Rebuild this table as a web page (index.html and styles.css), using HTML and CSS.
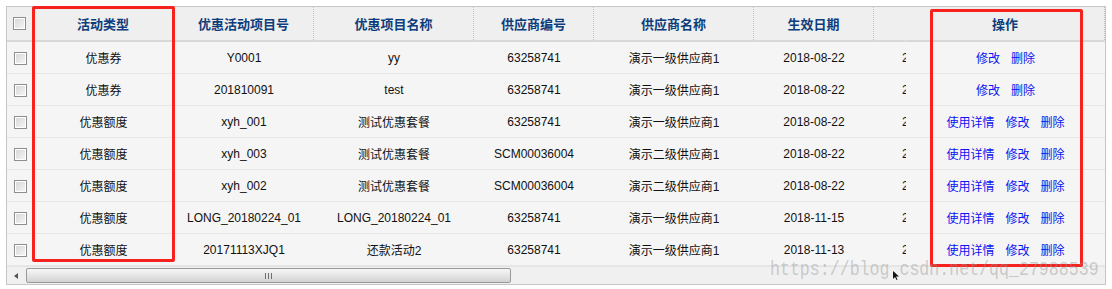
FILE: index.html
```html
<!DOCTYPE html>
<html lang="zh-CN">
<head>
    <meta charset="UTF-8">
    <title>活动列表</title>
    <link rel="stylesheet" href="styles.css">
</head>
<body>
    <div class="datagrid">
        <table class="grid-table">
            <colgroup>
                <col class="col-ck">
                <col class="col-type">
                <col class="col-no">
                <col class="col-name">
                <col class="col-sup">
                <col class="col-supname">
                <col class="col-date">
                <col class="col-end">
                <col class="col-op">
            </colgroup>
            <thead>
                <tr>
                    <th><span class="ck"></span></th>
                    <th>活动类型</th>
                    <th>优惠活动项目号</th>
                    <th>优惠项目名称</th>
                    <th>供应商编号</th>
                    <th>供应商名称</th>
                    <th>生效日期</th>
                    <th></th>
                    <th>操作</th>
                </tr>
            </thead>
            <tbody>
                <tr>
                    <td><span class="ck"></span></td>
                    <td>优惠券</td>
                    <td>Y0001</td>
                    <td>yy</td>
                    <td>63258741</td>
                    <td>演示一级供应商1</td>
                    <td>2018-08-22</td>
                    <td class="cut"><span>2</span></td>
                    <td class="ops"><a href="#">修改</a><a href="#">删除</a></td>
                </tr>
                <tr>
                    <td><span class="ck"></span></td>
                    <td>优惠券</td>
                    <td>201810091</td>
                    <td>test</td>
                    <td>63258741</td>
                    <td>演示一级供应商1</td>
                    <td>2018-08-22</td>
                    <td class="cut"><span>2</span></td>
                    <td class="ops"><a href="#">修改</a><a href="#">删除</a></td>
                </tr>
                <tr>
                    <td><span class="ck"></span></td>
                    <td>优惠额度</td>
                    <td>xyh_001</td>
                    <td>测试优惠套餐</td>
                    <td>63258741</td>
                    <td>演示一级供应商1</td>
                    <td>2018-08-22</td>
                    <td class="cut"><span>2</span></td>
                    <td class="ops"><a href="#">使用详情</a><a href="#">修改</a><a href="#">删除</a></td>
                </tr>
                <tr>
                    <td><span class="ck"></span></td>
                    <td>优惠额度</td>
                    <td>xyh_003</td>
                    <td>测试优惠套餐</td>
                    <td>SCM00036004</td>
                    <td>演示二级供应商1</td>
                    <td>2018-08-22</td>
                    <td class="cut"><span>2</span></td>
                    <td class="ops"><a href="#">使用详情</a><a href="#">修改</a><a href="#">删除</a></td>
                </tr>
                <tr>
                    <td><span class="ck"></span></td>
                    <td>优惠额度</td>
                    <td>xyh_002</td>
                    <td>测试优惠套餐</td>
                    <td>SCM00036004</td>
                    <td>演示二级供应商1</td>
                    <td>2018-08-22</td>
                    <td class="cut"><span>2</span></td>
                    <td class="ops"><a href="#">使用详情</a><a href="#">修改</a><a href="#">删除</a></td>
                </tr>
                <tr>
                    <td><span class="ck"></span></td>
                    <td>优惠额度</td>
                    <td>LONG_20180224_01</td>
                    <td>LONG_20180224_01</td>
                    <td>63258741</td>
                    <td>演示一级供应商1</td>
                    <td>2018-11-15</td>
                    <td class="cut"><span>2</span></td>
                    <td class="ops"><a href="#">使用详情</a><a href="#">修改</a><a href="#">删除</a></td>
                </tr>
                <tr>
                    <td><span class="ck"></span></td>
                    <td>优惠额度</td>
                    <td>20171113XJQ1</td>
                    <td>还款活动2</td>
                    <td>63258741</td>
                    <td>演示一级供应商1</td>
                    <td>2018-11-13</td>
                    <td class="cut"><span>2</span></td>
                    <td class="ops"><a href="#">使用详情</a><a href="#">修改</a><a href="#">删除</a></td>
                </tr>
            </tbody>
        </table>
        <!-- horizontal scrollbar of the grid body -->
        <div class="hscroll">
            <span class="hs-btn"><i class="hs-arrow"></i></span>
            <span class="hs-thumb"><i class="hs-grip"></i></span>
        </div>
    </div>

    <!-- red highlight frames -->
    <div class="mark mark-type"></div>
    <div class="mark mark-op"></div>

    <div class="watermark">https://blog.csdn.net/qq_27988539</div>
    <svg class="pointer" width="6" height="9" viewBox="0 0 6 9"><path d="M0 0 L0 8 L2 6 L3.5 9 L4.5 8.5 L3 5.5 L6 5.5 Z" fill="#111"/></svg>
</body>
</html>
```

FILE: styles.css
```css
body{
    margin: 0;
    padding: 6px;
    background-color: #fff;
    font-family: "Liberation Sans", "Noto Sans CJK SC", sans-serif;
    font-size: 12px;
    color: #111;
}

.datagrid{
    width: 1100px;
    box-sizing: border-box;
    border: 1px solid #c6c6c6;
    background-color: #f5f5f5;
    overflow: hidden;
}

.grid-table{
    width: 1098px;
    table-layout: fixed;
    border-collapse: separate;
    border-spacing: 0;
}
.col-ck{ width: 26px; }
.col-type{ width: 141px; }
.col-no{ width: 140px; }
.col-name{ width: 160px; }
.col-sup{ width: 120px; }
.col-supname{ width: 160px; }
.col-date{ width: 120px; }
.col-end{ width: 32px; }
.col-op{ width: 199px; }

.grid-table th{
    height: 33px;
    padding: 0;
    background-color: #efefef;
    border-bottom: 2px solid #d8d8d8;
    border-right: 1px dotted #c4c4c4;
    color: #0d3d7c;
    font-size: 13px;
    font-weight: bold;
    text-align: center;
}
.grid-table th:nth-child(8){
    border-right-color: transparent;
}

.grid-table td{
    height: 31px;
    padding: 0;
    border-bottom: 1px solid #e6e6e6;
    text-align: center;
    white-space: nowrap;
    overflow: hidden;
}
.grid-table td.cut{
    text-align: left;
    padding-left: 28px;
}
/* the next column runs on under the frozen op column, only its first digit shows */
.cut span{
    display: inline-block;
    width: 4px;
    overflow: hidden;
    vertical-align: middle;
}

.ck{
    display: inline-block;
    width: 11px;
    height: 11px;
    border: 1px solid #8e8e8e;
    background: linear-gradient(135deg, #d6d6d6, #f7f7f7);
    box-shadow: inset 0 0 0 1px #fff;
    vertical-align: middle;
}
th .ck{
    margin-top: -2px;
}

.ops a{
    color: #0a14f0;
    text-decoration: none;
    margin: 0 5.5px;
}

/* scrollbar */
.hscroll{
    display: flex;
    align-items: center;
    height: 17px;
    background-color: #f0f0f0;
    border-top: 1px solid #e4e4e4;
}
.hs-btn{
    width: 18px;
    height: 17px;
    display: flex;
    align-items: center;
    justify-content: center;
}
.hs-arrow{
    width: 0;
    height: 0;
    border-top: 3px solid transparent;
    border-bottom: 3px solid transparent;
    border-right: 4px solid #555;
}
.hs-thumb{
    width: 485px;
    height: 15px;
    box-sizing: border-box;
    margin-left: 1px;
    border: 1px solid #9a9a9a;
    border-radius: 2px;
    background: linear-gradient(#f6f6f6, #e6e6e6 50%, #d2d2d2);
    display: flex;
    align-items: center;
    justify-content: center;
}
.hs-grip{
    width: 7px;
    height: 6px;
    background: repeating-linear-gradient(90deg, #6e6e6e 0 1px, transparent 1px 3px);
}

/* red frames drawn over the grid */
.mark{
    position: absolute;
    border: 3px solid #f5221d;
    border-radius: 2px;
}
.mark-type{
    left: 32px;
    top: 6px;
    width: 137px;
    height: 250px;
}
.mark-op{
    left: 930px;
    top: 9px;
    width: 147px;
    height: 252px;
}

.watermark{
    position: absolute;
    left: 770px;
    top: 259px;
    font-family: "Liberation Mono", monospace;
    font-size: 16.6px;
    line-height: 17px;
    color: rgba(150, 150, 150, 0.45);
    transform: scaleY(1.2);
    transform-origin: left top;
    white-space: nowrap;
}

.pointer{
    position: absolute;
    left: 893px;
    top: 271px;
}
```
